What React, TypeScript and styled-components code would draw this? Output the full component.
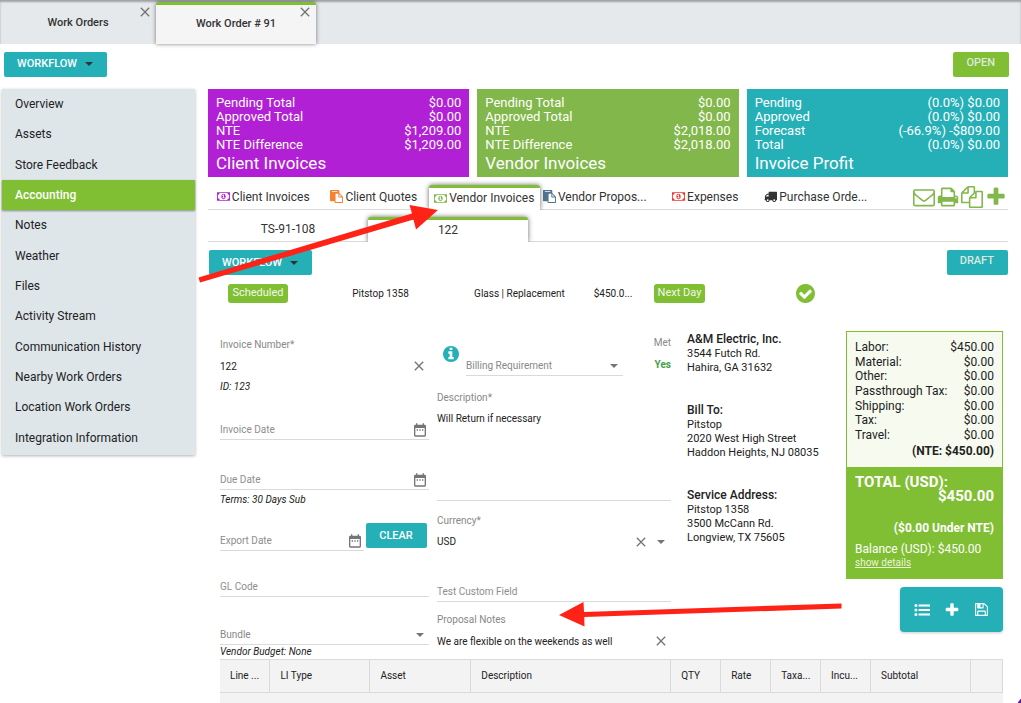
import React from "react";
import styled, { createGlobalStyle, css } from "styled-components";

const GREEN = "#80be33";
const LEAF = "#82b74b";
const TEAL = "#25b0b8";
const PURPLE = "#b220d6";
const LINE = "#dadada";

const GlobalStyle = createGlobalStyle`
  *, *::before, *::after { box-sizing: border-box; }
  body {
    margin: 0;
    background: #fff;
    color: #222;
    font: 11px/14px Roboto, "Liberation Sans", sans-serif;
    overflow-x: hidden;
  }
  button, input, textarea, select { font: inherit; color: inherit; }
  svg { display: block; flex: none; }
`;

/* ---------- icons ---------- */

const ICONS = {
  envelope:
    "M1664 1504v-768q-32 36-69 66-268 206-426 338-51 43-83 67t-86.500 48.500-102.500 24.500h-2q-48 0-102.500-24.500t-86.500-48.500-83-67q-158-132-426-338-37-30-69-66v768q0 13 9.500 22.500t22.500 9.500h1472q13 0 22.500-9.500t9.500-22.500zm0-1051v-24.500l-.5-13-3-12.500-5.500-9-9-7.500-14-2.500h-1472q-13 0-22.500 9.500t-9.500 22.500q0 168 147 284 193 152 401 317 6 5 35 29.500t46 37.500 44.500 31.500 50.500 27.500 43 9h2q20 0 43-9t50.500-27.500 44.500-31.500 46-37.500 35-29.500q208-165 401-317 54-43 100.500-115.500t46.500-131.500zm128-37v1088q0 66-47 113t-113 47h-1472q-66 0-113-47t-47-113v-1088q0-66 47-113t113-47h1472q66 0 113 47t47 113z",
  print:
    "M448 1536h896v-256h-896v256zm0-640h896v-384h-160q-40 0-68-28t-28-68v-160h-640v640zm1152 64q0-26-19-45t-45-19-45 19-19 45 19 45 45 19 45-19 19-45zm128 0v416q0 13-9.500 22.500t-22.500 9.500h-224v160q0 40-28 68t-68 28h-960q-40 0-68-28t-28-68v-160h-224q-13 0-22.500-9.500t-9.500-22.500v-416q0-79 56.500-135.500t135.500-56.500h64v-544q0-40 28-68t68-28h672q40 0 88 20t76 48l152 152q28 28 48 76t20 88v256h64q79 0 135.500 56.500t56.500 135.500z",
  files:
    "M1696 384q40 0 68 28t28 68v1216q0 40-28 68t-68 28h-960q-40 0-68-28t-28-68v-288h-544q-40 0-68-28t-28-68v-672q0-40 20-88t48-76l408-408q28-28 76-48t88-20h416q40 0 68 28t28 68v328q68-40 128-40h416zm-544 213l-299 299h299v-299zm-640-384l-299 299h299v-299zm196 647l316-316v-416h-384v416q0 40-28 68t-68 28h-416v640h512v-256q0-40 20-88t48-76zm956 804v-1152h-384v416q0 40-28 68t-68 28h-416v640h896z",
  plus: "M1600 736v192q0 40-28 68t-68 28h-416v416q0 40-28 68t-68 28h-192q-40 0-68-28t-28-68v-416h-416q-40 0-68-28t-28-68v-192q0-40 28-68t68-28h416v-416q0-40 28-68t68-28h192q40 0 68 28t28 68v416h416q40 0 68 28t28 68z",
  money:
    "M768 1152h384v-96h-128v-448h-114l-148 137 77 80q42-37 55-57h2v288h-128v96zm512-256q0 70-21 142t-59.500 134-101.500 101-138 39-138-39-101.500-101-59.500-134-21-142 21-142 59.500-134 101.500-101 138-39 138 39 101.500 101 59.500 134 21 142zm512 256v-512q-106 0-181-75t-75-181h-1152q0 106-75 181t-181 75v512q106 0 181 75t75 181h1152q0-106 75-181t181-75zm128-832v1152q0 26-19 45t-45 19h-1792q-26 0-45-19t-19-45v-1152q0-26 19-45t45-19h1792q26 0 45 19t19 45z",
  paste:
    "M768 1664h896v-640h-416q-40 0-68-28t-28-68v-416h-384v1152zm256-1440v-64q0-13-9.500-22.500t-22.500-9.500h-704q-13 0-22.500 9.500t-9.500 22.500v64q0 13 9.500 22.500t22.500 9.500h704q13 0 22.500-9.500t9.500-22.500zm256 672h299l-299-299v299zm512 128v672q0 40-28 68t-68 28h-960q-40 0-68-28t-28-68v-160h-544q-40 0-68-28t-28-68v-1344q0-40 28-68t68-28h1088q40 0 68 28t28 68v328q21 13 36 28l408 408q28 28 48 76t20 88z",
  truck:
    "M640 1408q0-52-38-90t-90-38-90 38-38 90 38 90 90 38 90-38 38-90zm-384-512h384v-256h-158q-13 0-22 9l-195 195q-9 9-9 22v30zm1280 512q0-52-38-90t-90-38-90 38-38 90 38 90 90 38 90-38 38-90zm256-1088v1024q0 15-4 26.500t-13.500 18.500-16.500 11.500-23.500 6-22.500 2-25.500 0-22.500-.5q0 106-75 181t-181 75-181-75-75-181h-384q0 106-75 181t-181 75-181-75-75-181h-64q-3 0-22.500.5t-25.500 0-22.500-2-23.500-6-16.500-11.500-13.500-18.500-4-26.500q0-26 19-45t45-19v-320q0-8-.5-35t0-38 2.500-34.500 6.500-37 14-30.500 22.500-30l198-198q19-19 50.500-32t58.500-13h160v-192q0-26 19-45t45-19h1024q26 0 45 19t19 45z",
  save: "M512 1536h768v-384h-768v384zm896 0h128v-896q0-14-10-38.500t-20-34.500l-281-281q-10-10-34-20t-39-10v416q0 40-28 68t-68 28h-576q-40 0-68-28t-28-68v-416h-128v1280h128v-416q0-40 28-68t68-28h832q40 0 68 28t28 68v416zm-384-928v-320q0-13-9.500-22.500t-22.500-9.500h-192q-13 0-22.500 9.500t-9.500 22.500v320q0 13 9.500 22.500t22.500 9.500h192q13 0 22.500-9.500t9.500-22.500zm640 32v928q0 40-28 68t-68 28h-1344q-40 0-68-28t-28-68v-1344q0-40 28-68t68-28h928q40 0 88 20t76 48l280 280q28 28 48 76t20 88z",
  check:
    "M1412 734q0-28-18-46l-91-90q-19-19-45-19t-45 19l-408 407-226-226q-19-19-45-19t-45 19l-91 90q-18 18-18 46 0 27 18 45l362 362q19 19 45 19 27 0 46-19l543-543q18-18 18-45zm252 162q0 209-103 385.500t-279.500 279.500-385.500 103-385.500-103-279.500-279.500-103-385.500 103-385.500 279.500-279.500 385.500-103 385.500 103 279.500 279.500 103 385.500z",
  info: "M1152 1376v-160q0-14-9-23t-23-9h-96v-512q0-14-9-23t-23-9h-320q-14 0-23 9t-9 23v160q0 14 9 23t23 9h96v320h-96q-14 0-23 9t-9 23v160q0 14 9 23t23 9h448q14 0 23-9t9-23zm-128-896v-160q0-14-9-23t-23-9h-192q-14 0-23 9t-9 23v160q0 14 9 23t23 9h192q14 0 23-9t9-23zm640 416q0 209-103 385.500t-279.500 279.500-385.500 103-385.500-103-279.500-279.500-103-385.500 103-385.500 279.500-279.500 385.500-103 385.500 103 279.500 279.500 103 385.500z",
  list: "M384 1408a170 170 0 1 1-340 0 170 170 0 0 1 340 0zM384 896a170 170 0 1 1-340 0 170 170 0 0 1 340 0zM384 384a170 170 0 1 1-340 0 170 170 0 0 1 340 0zM512 1290h1280v230h-1280zM512 780h1280v230h-1280zM512 270h1280v230h-1280z",
};

type IconName = keyof typeof ICONS;

const Icon = ({ name, size, color = "currentColor" }: { name: IconName; size: number; color?: string }) => (
  <svg
    width={size}
    height={size}
    viewBox={name === "money" ? "0 0 1920 1792" : ["check", "info"].includes(name) ? "128 128 1536 1536" : "0 0 1792 1792"}
    fill={color}
    aria-hidden
  >
    <path d={ICONS[name]} />
  </svg>
);

const CloseIcon = ({ size = 16 }: { size?: number }) => (
  <svg width={size} height={size} viewBox="0 0 24 24" fill="#757575" aria-hidden>
    <path d="M19 6.410L17.590 5 12 10.590 6.410 5 5 6.410 10.590 12 5 17.590 6.410 19 12 13.410 17.590 19 19 17.590 13.410 12z" />
  </svg>
);

const CalendarIcon = () => (
  <svg width="16" height="16" viewBox="0 0 24 24" fill="#757575" aria-hidden>
    <path d="M9 11H7v2h2v-2zm4 0h-2v2h2v-2zm4 0h-2v2h2v-2zm2-7h-1V2h-2v2H8V2H6v2H5c-1.110 0-1.990.9-1.990 2L3 20c0 1.100.89 2 2 2h14c1.100 0 2-.9 2-2V6c0-1.100-.9-2-2-2zm0 16H5V9h14v11z" />
  </svg>
);

const Caret = styled.span`
  flex: none;
  width: 0;
  height: 0;
  border: 4px solid transparent;
  border-top-color: #333;
  border-bottom: 0;
`;

const FieldCaret = styled(Caret)`
  margin-right: 4px;
  border-top-color: #757575;
`;

/* ---------- page frame ---------- */

const Page = styled.div`
  position: relative;
  display: flex;
  flex-direction: column;
  min-height: 100vh;
  overflow: hidden;
`;

const TopTabs = styled.nav`
  display: flex;
  height: 44px;
  padding-top: 2px;
  background: #e5e9ec;
  box-shadow: inset 0 2px 2px rgba(0, 0, 0, 0.3);
`;

const TopTab = styled.div<{ $active?: boolean }>`
  position: relative;
  display: flex;
  width: ${(p) => (p.$active ? 160 : 156)}px;
  ${(p) =>
    p.$active &&
    css`
      background: #f5f5f5;
      border-top: 3px solid ${GREEN};
      border-radius: 3px 3px 0 0;
      box-shadow: 0 0 4px rgba(0, 0, 0, 0.5);
    `}
`;

const TopTabLabel = styled.button`
  flex: 1;
  padding: 0 4px 1px;
  border: 0;
  background: none;
  font-weight: 500;
  color: #333;
`;

const CornerClose = styled.button<{ $active?: boolean }>`
  position: absolute;
  top: ${(p) => (p.$active ? -1 : 2)}px;
  right: 3px;
  padding: 0;
  border: 0;
  background: none;
`;

const ActionBar = styled.div`
  display: flex;
  align-items: center;
  justify-content: space-between;
  height: 45px;
  padding: 0 12px 5px 4px;
`;

const Button = styled.button`
  display: flex;
  align-items: center;
  justify-content: center;
  gap: 8px;
  height: 25px;
  padding: 0 14px 0 13px;
  border: 0;
  border-radius: 2px;
  background: ${TEAL};
  color: #fff;
  font-weight: 500;
`;

const StateButton = styled(Button)<{ $bg: string }>`
  padding-bottom: 3px;
  background: ${(p) => p.$bg};
  color: #dceadd;
`;

const Columns = styled.div`
  display: flex;
  flex: 1;
  align-items: stretch;
  gap: 13px;
  padding: 0 13px 0 2px;
`;

const SideNav = styled.nav`
  display: grid;
  grid-template-rows: repeat(12, 1fr);
  align-self: flex-start;
  flex: none;
  width: 193px;
  height: 366px;
  padding-bottom: 2px;
  background: #dee6ea;
  box-shadow: 0 1px 3px rgba(0, 0, 0, 0.3);
`;

const SideLink = styled.a<{ $active?: boolean }>`
  display: flex;
  align-items: center;
  padding-left: 13px;
  font-size: 12px;
  color: #222;
  text-decoration: none;
  ${(p) =>
    p.$active &&
    css`
      background: ${GREEN};
      color: #fff;
      font-weight: 500;
      box-shadow: 0 1px 2px rgba(0, 0, 0, 0.4);
    `}
`;

const Main = styled.main`
  display: flex;
  flex-direction: column;
  flex: 1;
  min-width: 0;
`;

/* ---------- summary cards ---------- */

const Cards = styled.div`
  display: grid;
  grid-template-columns: repeat(3, 1fr);
  gap: 8px;
`;

const Card = styled.section<{ $bg: string }>`
  height: 88px;
  padding: 7px 8px;
  background: ${(p) => p.$bg};
  color: #fff;
  font-size: 13px;
`;

const CardTitle = styled.h2`
  margin: 1px 0 0;
  font-size: 17px;
  line-height: 20px;
  font-weight: 400;
`;

const Pair = styled.div`
  display: flex;
  align-items: center;
  justify-content: space-between;
`;

/* ---------- tab strips ---------- */

const Strip = styled.div<{ $top: number }>`
  display: flex;
  height: 25px;
  margin-top: ${(p) => p.$top}px;
  border-bottom: 1px solid ${LINE};
`;

const SectionTabs = styled.div`
  display: grid;
  grid-template-columns: repeat(6, 1fr);
  flex: 1;
`;

const StripTab = styled.button<{ $active?: boolean; $fixed?: boolean }>`
  display: flex;
  align-items: center;
  justify-content: center;
  gap: 2px;
  width: ${(p) => (p.$fixed ? "160px" : "auto")};
  height: 23px;
  padding: 0;
  border: 0;
  background: none;
  font-size: 12px;
  white-space: nowrap;
  color: #333;
  ${(p) =>
    p.$active &&
    css`
      height: 25px;
      padding-bottom: 2px;
      background: #fff;
      border-top: 3px solid ${GREEN};
      border-radius: 3px 3px 0 0;
      box-shadow: 0 0 5px rgba(0, 0, 0, 0.6);
      clip-path: inset(-6px -6px 0 -6px);
    `}
`;

const StripActions = styled.div`
  display: flex;
  align-items: center;
  justify-content: flex-end;
  gap: 2px;
  width: 137px;
  padding: 0 1px 1px 0;
  color: ${LEAF};
`;

const IconButton = styled.button`
  display: flex;
  flex: none;
  padding: 0;
  border: 0;
  background: none;
  color: inherit;
`;

const InvoiceBar = styled.div`
  display: flex;
  justify-content: space-between;
  padding: 8px 0 0 1px;
`;

const StatusRow = styled.div`
  display: grid;
  grid-template-columns: 100fr 145fr 133fr 54fr 79fr 173fr 116fr;
  align-items: center;
  justify-items: center;
  height: 19px;
  margin-top: 9px;
  font-size: 10px;
`;

const Chip = styled.span`
  padding: 2px 4px 3px;
  border-radius: 3px;
  background: ${GREEN};
  color: #f2f8ea;
  font-size: 11px;
`;

/* ---------- invoice form ---------- */

const Form = styled.form`
  display: grid;
  grid-template-columns: 209fr 234fr 159fr 157fr;
  column-gap: 8px;
  height: 328px;
  margin-top: 28px;
  padding: 0 5px 0 12px;
`;

const FormColumn = styled.div`
  display: flex;
  flex-direction: column;
  min-width: 0;
  font-size: 10px;
`;

const Label = styled.label<{ $top: number }>`
  margin-top: ${(p) => p.$top}px;
  color: #888;
`;

const Row = styled.div<{ $top?: number; $line?: boolean; $tall?: boolean }>`
  display: flex;
  align-items: center;
  gap: 8px;
  height: ${(p) => (p.$tall ? 24 : 20)}px;
  margin-top: ${(p) => p.$top ?? 0}px;
  padding-right: ${(p) => (p.$tall ? 2 : 1)}px;
  border-bottom: ${(p) => (p.$line ? `1px solid ${LINE}` : "0")};
`;

const Input = styled.input`
  flex: 1;
  min-width: 0;
  width: 100%;
  height: 16px;
  padding: 0;
  border: 0;
  background: none;
  outline: 0;
  &::placeholder { color: #8e8e8e; opacity: 1; }
`;

const Select = styled.select<{ $empty?: boolean }>`
  flex: 1;
  min-width: 0;
  height: 16px;
  padding: 0;
  border: 0;
  background: none;
  appearance: none;
  color: ${(p) => (p.$empty ? "#888" : "#222")};
`;

const Hint = styled.em<{ $top?: number }>`
  margin-top: ${(p) => p.$top ?? 0}px;
`;

const ExportRow = styled.div`
  display: grid;
  grid-template-columns: 1fr 61px;
  gap: 2px;
  height: 28px;
  margin: 16px 2px 0 0;
  button { font-size: 11px; }
`;

const Billing = styled.div`
  display: grid;
  grid-template-columns: 16px 157fr 41fr;
  gap: 7px;
  height: 40px;
  margin: 5px 0 0 6px;
`;

const InfoBadge = styled.span`
  padding-top: 10px;
`;

const Met = styled.div`
  display: flex;
  flex-direction: column;
  gap: 8px;
  text-align: right;
  color: #888;
  strong { color: #43a047; }
`;

const TextArea = styled.textarea`
  height: 90px;
  margin-top: 6px;
  padding: 0;
  border: 0;
  border-bottom: 1px solid ${LINE};
  background: none;
  line-height: 16px;
  resize: none;
`;

const Addresses = styled.div`
  display: flex;
  flex-direction: column;
  gap: 27px;
  padding-left: 8px;
  white-space: nowrap;
`;

const Address = styled.address`
  font-style: normal;
`;

const AddressTitle = styled.h3`
  margin: 0;
  font-size: 12px;
  line-height: 16px;
  font-weight: 500;
`;

const Totals = styled.section`
  height: 248px;
  border: 1px solid ${GREEN};
  background: ${GREEN};
  color: #fff;
  font-size: 12px;
`;

const Breakdown = styled.div`
  height: 135px;
  padding: 8px;
  background: #f6faef;
  color: #222;
`;

const BreakdownRows = styled.div`
  display: grid;
  grid-auto-rows: 1fr;
  height: 102px;
`;

const RightBold = styled.div<{ $top: number }>`
  margin-top: ${(p) => p.$top}px;
  text-align: right;
  font-weight: 700;
`;

const TotalBlock = styled.div`
  padding: 8px;
`;

const GrandTotal = styled.div`
  font-size: 15px;
  font-weight: 700;
  div { text-align: right; }
`;

const Balance = styled.p`
  margin: 7px 0 0;
`;

const DetailsLink = styled.a`
  display: block;
  font-size: 10px;
  color: #e9f5d9;
`;

const FloatBar = styled.div`
  display: flex;
  align-items: center;
  justify-content: space-between;
  width: 103px;
  height: 45px;
  margin: 8px 0 0 auto;
  padding: 0 14px;
  border-radius: 4px;
  background: ${TEAL};
  color: #fff;
  box-shadow: 0 1px 3px rgba(0, 0, 0, 0.2);
`;

/* ---------- line items ---------- */

const TableArea = styled.div`
  flex: 1;
  margin: 0 5px 0 12px;
  background: #f3f3f3;
`;

const Table = styled.table`
  width: 100%;
  border-collapse: collapse;
  table-layout: fixed;
  font-size: 10px;
  th {
    height: 33px;
    padding: 0 4px 0 10px;
    border: 1px solid ${LINE};
    border-left: 0;
    text-align: left;
    font-weight: 400;
    color: #222;
    white-space: nowrap;
  }
`;

/* ---------- overlays ---------- */

const Arrows = styled.svg`
  position: absolute;
  top: 0;
  left: 0;
  pointer-events: none;
`;

const HelpBubble = styled.span`
  position: absolute;
  right: -34px;
  bottom: -30px;
  width: 40px;
  height: 40px;
  border-radius: 50%;
  background: #5e1a9c;
`;

const NAV = [
  "Overview", "Assets", "Store Feedback", "Accounting", "Notes", "Weather", "Files", "Activity Stream",
  "Communication History", "Nearby Work Orders", "Location Work Orders", "Integration Information",
];

const CARDS = [
  { title: "Client Invoices", bg: PURPLE, rows: [["Pending Total", "$0.00"], ["Approved Total", "$0.00"], ["NTE", "$1,209.00"], ["NTE Difference", "$1,209.00"]] },
  { title: "Vendor Invoices", bg: LEAF, rows: [["Pending Total", "$0.00"], ["Approved Total", "$0.00"], ["NTE", "$2,018.00"], ["NTE Difference", "$2,018.00"]] },
  { title: "Invoice Profit", bg: TEAL, rows: [["Pending", "(0.0%) $0.00"], ["Approved", "(0.0%) $0.00"], ["Forecast", "(-66.9%) -$809.00"], ["Total", "(0.0%) $0.00"]] },
];

const SECTIONS: { label: string; icon: IconName; color: string; active?: boolean }[] = [
  { label: "Client Invoices", icon: "money", color: PURPLE },
  { label: "Client Quotes", icon: "paste", color: "#f58233" },
  { label: "Vendor Invoices", icon: "money", color: LEAF, active: true },
  { label: "Vendor Propos...", icon: "paste", color: "#4f7690" },
  { label: "Expenses", icon: "money", color: "#f4352f" },
  { label: "Purchase Orde...", icon: "truck", color: "#333" },
];

const CHARGES = [
  ["Labor:", "$450.00"], ["Material:", "$0.00"], ["Other:", "$0.00"], ["Passthrough Tax:", "$0.00"],
  ["Shipping:", "$0.00"], ["Tax:", "$0.00"], ["Travel:", "$0.00"],
];

const PLACES = [
  ["A&M Electric, Inc.", "3544 Futch Rd.", "Hahira, GA 31632"],
  ["Bill To:", "Pitstop", "2020 West High Street", "Haddon Heights, NJ 08035"],
  ["Service Address:", "Pitstop 1358", "3500 McCann Rd.", "Longview, TX 75605"],
];

const HEADERS: [string, number][] = [
  ["Line ...", 50], ["LI Type", 100], ["Asset", 101], ["Description", 200], ["QTY", 50],
  ["Rate", 50], ["Taxa...", 50], ["Incu...", 50], ["Subtotal", 100], ["", 32],
];

const HeaderCol = styled.col<{ $share: number }>`
  width: calc(100% * ${(p) => p.$share} / 783);
`;

const DateField = ({ label, top }: { label: string; top?: number }) => (
  <Row $line $top={top}>
    <Input aria-label={label} placeholder={label} />
    <IconButton type="button" aria-label={`Pick ${label}`}><CalendarIcon /></IconButton>
  </Row>
);

export default function App() {
  return (
    <Page>
      <GlobalStyle />
      <TopTabs>
        <TopTab>
          <TopTabLabel>Work Orders</TopTabLabel>
          <CornerClose aria-label="Close Work Orders"><CloseIcon /></CornerClose>
        </TopTab>
        <TopTab $active>
          <TopTabLabel>Work Order # 91</TopTabLabel>
          <CornerClose $active aria-label="Close Work Order # 91"><CloseIcon /></CornerClose>
        </TopTab>
      </TopTabs>
      <ActionBar>
        <Button>WORKFLOW <Caret /></Button>
        <StateButton $bg={GREEN}>OPEN</StateButton>
      </ActionBar>
      <Columns>
        <SideNav>
          {NAV.map((item) => (
            <SideLink key={item} href="#" $active={item === "Accounting"}>{item}</SideLink>
          ))}
        </SideNav>
        <Main>
          <Cards>
            {CARDS.map((card) => (
              <Card key={card.title} $bg={card.bg}>
                {card.rows.map(([name, value]) => (
                  <Pair key={name}><span>{name}</span><span>{value}</span></Pair>
                ))}
                <CardTitle>{card.title}</CardTitle>
              </Card>
            ))}
          </Cards>

          <Strip $top={8}>
            <SectionTabs>
              {SECTIONS.map((s) => (
                <StripTab key={s.label} $active={s.active}>
                  <Icon name={s.icon} size={13} color={s.color} />
                  {s.label}
                </StripTab>
              ))}
            </SectionTabs>
            <StripActions>
              <IconButton aria-label="Email"><Icon name="envelope" size={22} /></IconButton>
              <IconButton aria-label="Print"><Icon name="print" size={22} /></IconButton>
              <IconButton aria-label="Copy"><Icon name="files" size={22} /></IconButton>
              <IconButton aria-label="Add"><Icon name="plus" size={22} /></IconButton>
            </StripActions>
          </Strip>
          <Strip $top={7}>
            <StripTab $fixed>TS-91-108</StripTab>
            <StripTab $fixed $active>122</StripTab>
          </Strip>

          <InvoiceBar>
            <Button>WORKFLOW <Caret /></Button>
            <StateButton $bg={TEAL}>DRAFT</StateButton>
          </InvoiceBar>
          <StatusRow>
            <Chip>Scheduled</Chip>
            <span>Pitstop 1358</span>
            <span>Glass | Replacement</span>
            <span>$450.0...</span>
            <Chip>Next Day</Chip>
            <Icon name="check" size={19} color={GREEN} />
          </StatusRow>

          <Form>
            <FormColumn>
              <Label $top={7} htmlFor="number">Invoice Number*</Label>
              <Row $tall $top={2}>
                <Input id="number" defaultValue="122" />
                <IconButton type="button" aria-label="Clear invoice number"><CloseIcon /></IconButton>
              </Row>
              <Hint $top={2}>ID: 123</Hint>
              <DateField label="Invoice Date" top={26} />
              <DateField label="Due Date" top={30} />
              <Hint $top={3}>Terms: 30 Days Sub</Hint>
              <ExportRow>
                <DateField label="Export Date" top={8} />
                <Button type="button">CLEAR</Button>
              </ExportRow>
              <Row $line $top={26}><Input aria-label="GL Code" placeholder="GL Code" /></Row>
              <Row $line $top={28}>
                <Select $empty aria-label="Bundle"><option>Bundle</option></Select>
                <FieldCaret />
              </Row>
              <Hint>Vendor Budget: None</Hint>
            </FormColumn>

            <FormColumn>
              <Billing>
                <InfoBadge><Icon name="info" size={16} color={TEAL} /></InfoBadge>
                <Row $line $top={20}>
                  <Select $empty aria-label="Billing Requirement"><option>Billing Requirement</option></Select>
                  <FieldCaret />
                </Row>
                <Met><span>Met</span><strong>Yes</strong></Met>
              </Billing>
              <Label $top={15} htmlFor="description">Description*</Label>
              <TextArea id="description" defaultValue="Will Return if necessary" />
              <Label $top={13} htmlFor="currency">Currency*</Label>
              <Row $tall $top={2}>
                <Select id="currency"><option>USD</option></Select>
                <IconButton type="button" aria-label="Clear currency"><CloseIcon /></IconButton>
                <FieldCaret />
              </Row>
              <Row $line $top={28}><Input aria-label="Test Custom Field" placeholder="Test Custom Field" /></Row>
              <Label $top={11} htmlFor="notes">Proposal Notes</Label>
              <Row $tall $top={2}>
                <Input id="notes" defaultValue="We are flexible on the weekends as well" />
                <IconButton type="button" aria-label="Clear proposal notes"><CloseIcon /></IconButton>
              </Row>
            </FormColumn>

            <Addresses>
              {PLACES.map(([title, ...lines]) => (
                <Address key={title}>
                  <AddressTitle>{title}</AddressTitle>
                  {lines.map((line) => <div key={line}>{line}</div>)}
                </Address>
              ))}
            </Addresses>

            <FormColumn>
              <Totals>
                <Breakdown>
                  <BreakdownRows>
                    {CHARGES.map(([name, value]) => (
                      <Pair key={name}><span>{name}</span><span>{value}</span></Pair>
                    ))}
                  </BreakdownRows>
                  <RightBold $top={2}>(NTE: $450.00)</RightBold>
                </Breakdown>
                <TotalBlock>
                  <GrandTotal>TOTAL (USD):<div>$450.00</div></GrandTotal>
                  <RightBold $top={18}>($0.00 Under NTE)</RightBold>
                  <Balance>Balance (USD): $450.00</Balance>
                  <DetailsLink href="#">show details</DetailsLink>
                </TotalBlock>
              </Totals>
              <FloatBar>
                <IconButton type="button" aria-label="List"><Icon name="list" size={16} /></IconButton>
                <IconButton type="button" aria-label="Add item"><Icon name="plus" size={16} /></IconButton>
                <IconButton type="button" aria-label="Save"><Icon name="save" size={15} /></IconButton>
              </FloatBar>
            </FormColumn>
          </Form>

          <TableArea>
            <Table>
              <colgroup>
                {HEADERS.map(([name, share]) => <HeaderCol key={name} $share={share} />)}
              </colgroup>
              <thead>
                <tr>{HEADERS.map(([name]) => <th key={name}>{name}</th>)}</tr>
              </thead>
            </Table>
          </TableArea>
        </Main>
      </Columns>

      <Arrows width="1021" height="703" viewBox="0 0 1021 703" fill="#ff2216" aria-hidden>
        <path d="M198.500 277.500L412 213.500L409.500 205L438 210L416 229.500L413.500 219.500L200 282.500Z" />
        <path d="M841.500 603.500L584 612L583.500 602L559 615L584.500 626.500L584.300 617L841.500 608.500Z" />
      </Arrows>
      <HelpBubble />
    </Page>
  );
}
